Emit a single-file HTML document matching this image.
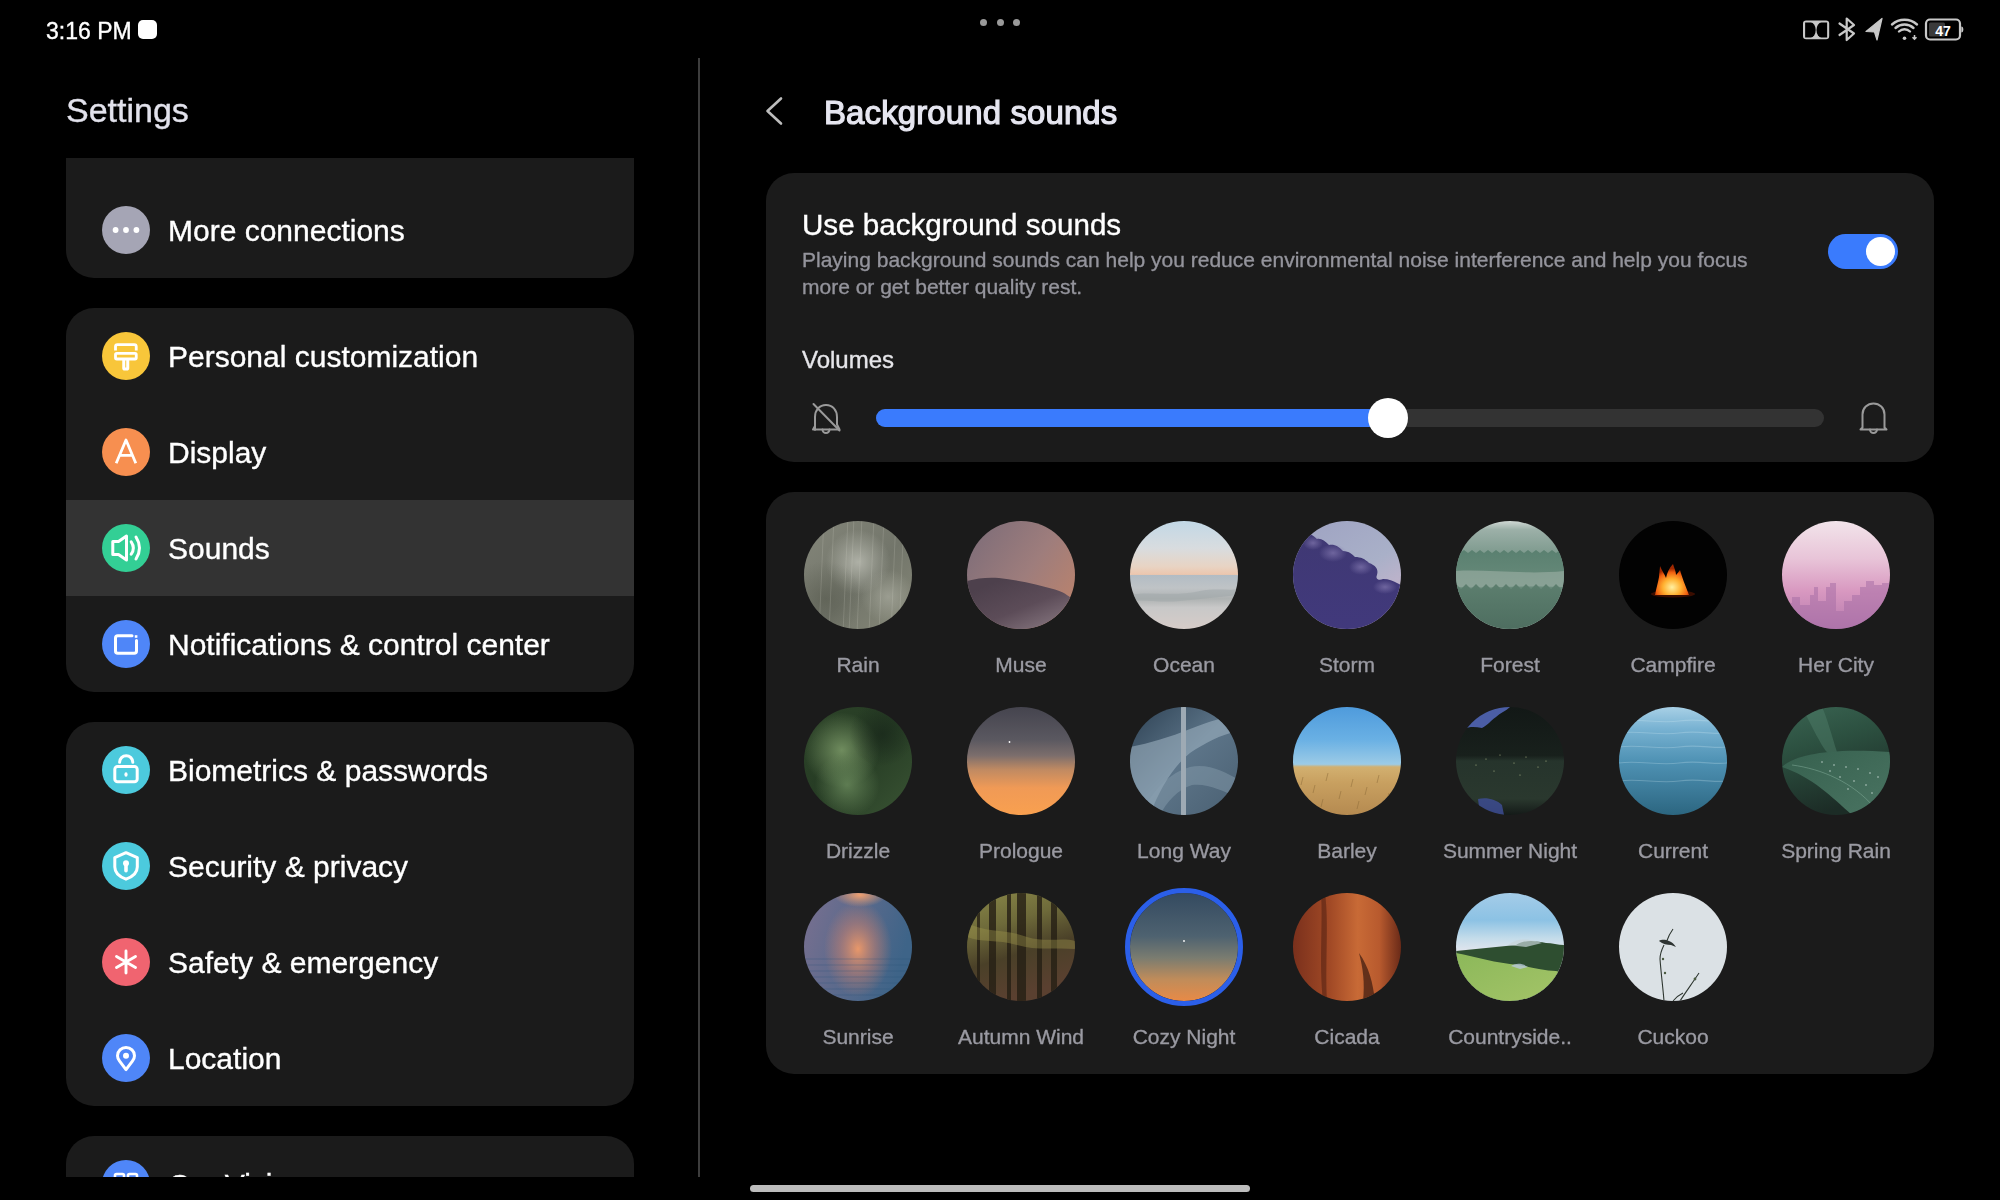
<!DOCTYPE html>
<html><head><meta charset="utf-8"><style>
html,body{margin:0;padding:0;background:#000;}
body{width:2000px;height:1200px;position:relative;overflow:hidden;font-family:"Liberation Sans", sans-serif;}
.t{position:absolute;white-space:nowrap;line-height:1;will-change:transform;-webkit-text-stroke:0.35px currentColor;}
svg{display:block}
</style></head><body>
<div class="t" style="left:45.5px;top:19.5px;font-size:23px;color:#ffffff;">3:16 PM</div>
<div style="position:absolute;left:138px;top:20px;width:19px;height:19px;border-radius:5px;background:#fff"></div>
<div style="position:absolute;left:980.0px;top:19px;width:7px;height:7px;border-radius:50%;background:#9a9a9a"></div>
<div style="position:absolute;left:996.5px;top:19px;width:7px;height:7px;border-radius:50%;background:#9a9a9a"></div>
<div style="position:absolute;left:1013.0px;top:19px;width:7px;height:7px;border-radius:50%;background:#9a9a9a"></div>
<svg style="position:absolute;left:1795px;top:12px" width="180" height="36" viewBox="1795 12 180 36">
<rect x="1803" y="20.4" width="26.2" height="18.9" rx="3.2" fill="#c8c8c8"/>
<path d="M1805.1,22.5 H1810.8 A4.9,7.45 0 0 1 1810.8,37.4 H1805.1 Z" fill="#000"/>
<path d="M1827.1,22.5 H1821.4 A4.9,7.45 0 0 0 1821.4,37.4 H1827.1 Z" fill="#000"/>
<g fill="none" stroke="#c8c8c8" stroke-width="2.2" stroke-linecap="round" stroke-linejoin="round">
 <path d="M1839.5,23.5 L1854,33.5 L1846.7,40 V18.5 L1854,25 L1839.5,35"/>
 <path d="M1921,16" />
</g>
<path d="M1866,31.5 L1882,18.5 L1877,40 L1874.5,32 Z" fill="#c8c8c8" stroke="#c8c8c8" stroke-width="1.2" stroke-linejoin="round"/>
<g fill="none" stroke="#c8c8c8" stroke-width="2.4" stroke-linecap="round">
 <path d="M1892,24.5 A19,19 0 0 1 1917,24.5"/>
 <path d="M1895.5,28 A13.5,13.5 0 0 1 1913.5,28"/>
 <path d="M1899,31.5 A8,8 0 0 1 1910,31.5"/>
</g>
<circle cx="1904.5" cy="38.3" r="1.8" fill="#c8c8c8"/>
<path d="M1914.5,35 v4 M1912.5,37.3 l2,2 l2,-2" stroke="#c8c8c8" stroke-width="1.5" fill="none"/>
<rect x="1926" y="19.5" width="34" height="20" rx="4" fill="none" stroke="#c8c8c8" stroke-width="2.2"/>
<path d="M1961.3,26.5 a2,3 0 0 1 0,6 z" fill="#c8c8c8"/>
<rect x="1929" y="22.5" width="16" height="14" rx="1.5" fill="#3a3a3a"/>
<text x="1943" y="35.5" font-family="Liberation Sans" font-weight="bold" font-size="14" fill="#ffffff" text-anchor="middle">47</text>
</svg>
<div class="t" style="left:66px;top:92.8px;font-size:34px;color:#e2e2ec;">Settings</div>
<div style="position:absolute;left:698px;top:58px;width:2px;height:1119px;background:#3d3d3d"></div>
<div id="leftclip" style="position:absolute;left:0;top:158px;width:698px;height:1019px;overflow:hidden">
<div style="position:absolute;left:66px;top:-28px;width:568px;height:148px;border-radius:28px;background:#1b1b1b;overflow:hidden;"></div>
<div style="position:absolute;left:66px;top:150px;width:568px;height:384px;border-radius:28px;background:#1b1b1b;overflow:hidden;"></div>
<div style="position:absolute;left:66px;top:342px;width:568px;height:96px;background:#333333"></div>
<div style="position:absolute;left:66px;top:564px;width:568px;height:384px;border-radius:28px;background:#1b1b1b;overflow:hidden;"></div>
<div style="position:absolute;left:66px;top:978px;width:568px;height:200px;border-radius:28px;background:#1b1b1b;overflow:hidden;"></div>
<svg style="position:absolute;left:102px;top:48px" width="48" height="48" viewBox="0 0 48 48"><circle cx="24" cy="24" r="24" fill="#a5a5b5"/><circle cx="13.6" cy="24" r="2.9" fill="#fff"/><circle cx="24" cy="24" r="2.9" fill="#fff"/><circle cx="34.4" cy="24" r="2.9" fill="#fff"/></svg>
<div class="t" style="left:168px;top:58.2px;font-size:30px;color:#ffffff;">More connections</div>
<svg style="position:absolute;left:102px;top:174px" width="48" height="48" viewBox="0 0 48 48"><circle cx="24" cy="24" r="24" fill="#f8c63a"/><path d="M13.5,18.6 V14.6 a2,2 0 0 1 2,-2 H32.25 a2,2 0 0 1 2,2 V18.6" fill="none" stroke="#fff" stroke-width="2.8"/><rect x="13.5" y="21.4" width="20.75" height="5.6" rx="1.2" fill="none" stroke="#fff" stroke-width="2.8"/><path d="M21.75,28 V36.3 a0.8,0.8 0 0 0 0.8,0.8 H24.95 a0.8,0.8 0 0 0 0.8,-0.8 V28" fill="none" stroke="#fff" stroke-width="3" stroke-linejoin="round"/></svg>
<div class="t" style="left:168px;top:184.2px;font-size:30px;color:#ffffff;">Personal customization</div>
<svg style="position:absolute;left:102px;top:270px" width="48" height="48" viewBox="0 0 48 48"><circle cx="24" cy="24" r="24" fill="#f78f50"/><path d="M14.2,35.2 L24,12 L33.8,35.2 M18,27.3 H30" fill="none" stroke="#fff" stroke-width="2.8" stroke-linejoin="round"/></svg>
<div class="t" style="left:168px;top:280.2px;font-size:30px;color:#ffffff;">Display</div>
<svg style="position:absolute;left:102px;top:366px" width="48" height="48" viewBox="0 0 48 48"><circle cx="24" cy="24" r="24" fill="#33cf95"/><path d="M10.8,17.5 H16.5 L24.5,12 V36 L16.5,30.5 H10.8 Z" fill="none" stroke="#fff" stroke-width="3" stroke-linejoin="round"/><path d="M29.2,17.8 Q33.5,24 29.2,30.2" fill="none" stroke="#fff" stroke-width="3" stroke-linecap="round"/><path d="M34,13 Q41,24 34,35" fill="none" stroke="#fff" stroke-width="3" stroke-linecap="round"/></svg>
<div class="t" style="left:168px;top:376.2px;font-size:30px;color:#ffffff;">Sounds</div>
<svg style="position:absolute;left:102px;top:462px" width="48" height="48" viewBox="0 0 48 48"><circle cx="24" cy="24" r="24" fill="#4f86f8"/><path d="M30,15.8 H15.8 a2.3,2.3 0 0 0 -2.3,2.3 V31 a2.3,2.3 0 0 0 2.3,2.3 H32.2 a2.3,2.3 0 0 0 2.3,-2.3 V20.5" fill="none" stroke="#fff" stroke-width="3" stroke-linecap="round"/><rect x="32.8" y="15.2" width="2.6" height="2.6" fill="#fff"/></svg>
<div class="t" style="left:168px;top:472.2px;font-size:30px;color:#ffffff;">Notifications &amp; control center</div>
<svg style="position:absolute;left:102px;top:588px" width="48" height="48" viewBox="0 0 48 48"><circle cx="24" cy="24" r="24" fill="#4ccadd"/><rect x="12.8" y="20.5" width="22.4" height="15.3" rx="2.8" fill="none" stroke="#fff" stroke-width="3"/><path d="M17.6,16.3 a6.6,6.6 0 0 1 13.2,0" fill="none" stroke="#fff" stroke-width="3" stroke-linecap="round"/><ellipse cx="24" cy="28.5" rx="1.6" ry="2.2" fill="#fff"/></svg>
<div class="t" style="left:168px;top:598.2px;font-size:30px;color:#ffffff;">Biometrics &amp; passwords</div>
<svg style="position:absolute;left:102px;top:684px" width="48" height="48" viewBox="0 0 48 48"><circle cx="24" cy="24" r="24" fill="#4ccadd"/><path d="M24,10.7 L12.8,15.6 V25 C12.8,30.8 17.5,34.8 24,37.2 C30.5,34.8 35.3,30.8 35.3,25 V15.6 Z" fill="none" stroke="#fff" stroke-width="3" stroke-linejoin="round"/><circle cx="24" cy="21.3" r="3" fill="#fff"/><path d="M24,22 V28.8" stroke="#fff" stroke-width="3.6" stroke-linecap="round"/></svg>
<div class="t" style="left:168px;top:694.2px;font-size:30px;color:#ffffff;">Security &amp; privacy</div>
<svg style="position:absolute;left:102px;top:780px" width="48" height="48" viewBox="0 0 48 48"><circle cx="24" cy="24" r="24" fill="#f06470"/><path d="M24,13 V35 M14.5,18.5 L33.5,29.5 M14.5,29.5 L33.5,18.5" fill="none" stroke="#fff" stroke-width="2.9" stroke-linecap="round"/></svg>
<div class="t" style="left:168px;top:790.2px;font-size:30px;color:#ffffff;">Safety &amp; emergency</div>
<svg style="position:absolute;left:102px;top:876px" width="48" height="48" viewBox="0 0 48 48"><circle cx="24" cy="24" r="24" fill="#4f86f8"/><path d="M24,35.6 L17.6,27.2 C16.2,25.3 15.5,23.6 15.5,21.7 C15.5,17.1 19.3,13.5 24,13.5 C28.7,13.5 32.5,17.1 32.5,21.7 C32.5,23.6 31.8,25.3 30.4,27.2 Z" fill="none" stroke="#fff" stroke-width="3" stroke-linejoin="round"/><circle cx="24" cy="21.8" r="3" fill="#fff"/></svg>
<div class="t" style="left:168px;top:886.2px;font-size:30px;color:#ffffff;">Location</div>
<svg style="position:absolute;left:102px;top:1002px" width="48" height="48" viewBox="0 0 48 48"><circle cx="24" cy="24" r="24" fill="#4f86f8"/><rect x="13" y="14" width="9" height="8" rx="1.5" fill="none" stroke="#fff" stroke-width="2.6"/><rect x="26" y="14" width="9" height="8" rx="1.5" fill="none" stroke="#fff" stroke-width="2.6"/></svg>
<div class="t" style="left:168px;top:1012.2px;font-size:30px;color:#ffffff;">OneVision</div>
</div>
<svg style="position:absolute;left:760px;top:92px" width="30" height="40" viewBox="760 92 30 40"><path d="M781,98.5 L767.5,111 L781,123.5" fill="none" stroke="#bdbdbd" stroke-width="2.6" stroke-linecap="round" stroke-linejoin="round"/></svg>
<div class="t" style="left:823.5px;top:96.1px;font-size:33px;color:#e6e6f0;-webkit-text-stroke:1.2px #e6e6f0;letter-spacing:0.1px;">Background sounds</div>
<div style="position:absolute;left:766px;top:173px;width:1168px;height:289px;border-radius:28px;background:#1b1b1b;overflow:hidden;"></div>
<div class="t" style="left:802px;top:210.4px;font-size:29.6px;color:#ffffff;">Use background sounds</div>
<div class="t" style="left:802px;top:249.0px;font-size:21px;color:#94949c;">Playing background sounds can help you reduce environmental noise interference and help you focus</div>
<div class="t" style="left:802px;top:275.5px;font-size:21px;color:#94949c;">more or get better quality rest.</div>
<div style="position:absolute;left:1828px;top:234px;width:70px;height:35px;border-radius:18px;background:#3a7bfd"></div>
<div style="position:absolute;left:1866px;top:237px;width:29px;height:29px;border-radius:50%;background:#fff"></div>
<div class="t" style="left:802px;top:347.7px;font-size:24px;color:#e6e6ea;">Volumes</div>
<div style="position:absolute;left:876px;top:409px;width:948px;height:18px;border-radius:9px;background:#333333"></div>
<div style="position:absolute;left:876px;top:409px;width:512px;height:18px;border-radius:9px 0 0 9px;background:#3a7bfd"></div>
<div style="position:absolute;left:1368px;top:398px;width:40px;height:40px;border-radius:50%;background:#fff"></div>
<svg style="position:absolute;left:806px;top:398px" width="40" height="40" viewBox="806 398 40 40"><g fill="none" stroke="#9a9a9a" stroke-width="2" stroke-linejoin="round" stroke-linecap="round">
<path d="M815,430 V417 C815,410 819.5,405 826,405 C832.5,405 837,410 837,417 V424.5 L839.5,429.5 H813 L815,426"/>
<path d="M822.5,429.5 a3.5,3.5 0 0 0 7,0"/>
<path d="M813.5,404 L839.5,430.5"/></g></svg>
<svg style="position:absolute;left:1855px;top:398px" width="40" height="40" viewBox="1855 398 40 40"><g fill="none" stroke="#9a9a9a" stroke-width="2" stroke-linejoin="round" stroke-linecap="round">
<path d="M1862.5,427.5 V414.5 C1862.5,408 1867.5,403.5 1873.5,403.5 C1879.5,403.5 1884.5,408 1884.5,414.5 V427.5 L1886.5,429.5 H1860.5 Z"/>
<path d="M1870,429.5 a3.5,3.5 0 0 0 7,0"/></g></svg>
<div style="position:absolute;left:766px;top:492px;width:1168px;height:582px;border-radius:28px;background:#1b1b1b;overflow:hidden;"></div>
<svg style="position:absolute;left:804px;top:521px" width="108" height="108" viewBox="0 0 108 108"><defs><linearGradient id="s1g" x1="0" y1="0" x2="1" y2="1"><stop offset="0" stop-color="#84867a"/><stop offset="0.55" stop-color="#72756a"/><stop offset="1" stop-color="#868878"/></linearGradient><radialGradient id="s1h" cx="0.5" cy="0.38" r="0.3"><stop offset="0" stop-color="#b4b6ac" stop-opacity="0.9"/><stop offset="1" stop-color="#b4b6ac" stop-opacity="0"/></radialGradient><radialGradient id="s1h2" cx="0.78" cy="0.7" r="0.25"><stop offset="0" stop-color="#a8aa9e" stop-opacity="0.7"/><stop offset="1" stop-color="#a8aa9e" stop-opacity="0"/></radialGradient><radialGradient id="s1k" cx="0.2" cy="0.72" r="0.35"><stop offset="0" stop-color="#55584c" stop-opacity="0.6"/><stop offset="1" stop-color="#55584c" stop-opacity="0"/></radialGradient><clipPath id="s1c"><circle cx="54" cy="54" r="54"/></clipPath></defs><g clip-path="url(#s1c)"><rect width="108" height="108" fill="url(#s1g)"/><rect width="108" height="108" fill="url(#s1h)"/><rect width="108" height="108" fill="url(#s1h2)"/><rect width="108" height="108" fill="url(#s1k)"/><path d="M20,-5 L15,113" stroke="#dedcd2" stroke-opacity="0.2" stroke-width="0.9"/><path d="M30,-5 L25,113" stroke="#dedcd2" stroke-opacity="0.2" stroke-width="0.9"/><path d="M44,-5 L39,113" stroke="#dedcd2" stroke-opacity="0.2" stroke-width="0.9"/><path d="M50,-5 L45,113" stroke="#dedcd2" stroke-opacity="0.2" stroke-width="0.9"/><path d="M58,-5 L53,113" stroke="#dedcd2" stroke-opacity="0.2" stroke-width="0.9"/><path d="M70,-5 L65,113" stroke="#dedcd2" stroke-opacity="0.2" stroke-width="0.9"/><path d="M80,-5 L75,113" stroke="#dedcd2" stroke-opacity="0.2" stroke-width="0.9"/><path d="M92,-5 L87,113" stroke="#dedcd2" stroke-opacity="0.2" stroke-width="0.9"/><path d="M100,-5 L95,113" stroke="#dedcd2" stroke-opacity="0.2" stroke-width="0.9"/></g></svg>
<div class="t" style="left:708px;width:300px;text-align:center;top:654.2px;font-size:21px;color:#9a9aa2;">Rain</div>
<svg style="position:absolute;left:967px;top:521px" width="108" height="108" viewBox="0 0 108 108"><defs><linearGradient id="s2g" x1="0" y1="0" x2="1" y2="0.7"><stop offset="0" stop-color="#7a6b78"/><stop offset="0.6" stop-color="#9e7d7c"/><stop offset="1" stop-color="#b8826e"/></linearGradient><linearGradient id="s2d" x1="0" y1="0.3" x2="0.6" y2="1"><stop offset="0" stop-color="#4d404c"/><stop offset="0.6" stop-color="#5c4c58"/><stop offset="1" stop-color="#7a6a74"/></linearGradient><clipPath id="s2c"><circle cx="54" cy="54" r="54"/></clipPath></defs><g clip-path="url(#s2c)"><rect width="108" height="108" fill="url(#s2g)"/><path d="M0,60 C10,57 22,56 32,57 C50,59 70,63 88,68.5 C96,71 101,74 106,79 L108,80 V108 H0 Z" fill="url(#s2d)"/></g></svg>
<div class="t" style="left:871px;width:300px;text-align:center;top:654.2px;font-size:21px;color:#9a9aa2;">Muse</div>
<svg style="position:absolute;left:1130px;top:521px" width="108" height="108" viewBox="0 0 108 108"><defs><linearGradient id="s3g" x1="0" y1="0" x2="0" y2="1"><stop offset="0" stop-color="#c2d8e6"/><stop offset="0.25" stop-color="#d8dcdf"/><stop offset="0.42" stop-color="#e8d4c4"/><stop offset="0.495" stop-color="#ecc6ae"/><stop offset="0.5" stop-color="#b2bcc4"/><stop offset="0.62" stop-color="#bfc3c6"/><stop offset="0.72" stop-color="#aeb2b2"/><stop offset="0.8" stop-color="#c8c8c8"/><stop offset="1" stop-color="#d6ccc8"/></linearGradient><clipPath id="s3c"><circle cx="54" cy="54" r="54"/></clipPath></defs><g clip-path="url(#s3c)"><rect width="108" height="108" fill="url(#s3g)"/><path d="M0,74 C20,70 45,76 70,70 C85,67 100,70 108,68 V74 C90,76 70,78 50,80 C30,82 15,78 0,80 Z" fill="#9ea6a8" opacity="0.5"/></g></svg>
<div class="t" style="left:1034px;width:300px;text-align:center;top:654.2px;font-size:21px;color:#9a9aa2;">Ocean</div>
<svg style="position:absolute;left:1293px;top:521px" width="108" height="108" viewBox="0 0 108 108"><defs><linearGradient id="s4g" x1="0" y1="0" x2="0.6" y2="1"><stop offset="0" stop-color="#9ea2c2"/><stop offset="0.6" stop-color="#a9b0c8"/><stop offset="1" stop-color="#c9b4cc"/></linearGradient><linearGradient id="s4d" x1="0" y1="0" x2="0" y2="1"><stop offset="0" stop-color="#3f3873"/><stop offset="1" stop-color="#41397c"/></linearGradient><radialGradient id="s4p" cx="0.5" cy="0.5" r="0.5"><stop offset="0" stop-color="#7a70a8" stop-opacity="0.8"/><stop offset="1" stop-color="#7a70a8" stop-opacity="0"/></radialGradient><clipPath id="s4c"><circle cx="54" cy="54" r="54"/></clipPath></defs><g clip-path="url(#s4c)"><rect width="108" height="108" fill="url(#s4g)"/><path d="M0,12 C6,10 10,14 14,14 C18,12 22,16 24,18 C28,17 32,20 36,24 C42,23 46,26 50,30 C56,30 60,34 62,36 C68,36 72,38 76,42 C82,44 86,48 84,54 C82,58 86,60 90,58 C96,58 100,60 104,62 L108,64 V108 H0 Z" fill="url(#s4d)"/><ellipse cx="40" cy="32" rx="14" ry="9" fill="url(#s4p)"/><ellipse cx="68" cy="46" rx="12" ry="8" fill="url(#s4p)"/><ellipse cx="92" cy="66" rx="12" ry="7" fill="url(#s4p)"/><ellipse cx="20" cy="22" rx="10" ry="7" fill="url(#s4p)"/></g></svg>
<div class="t" style="left:1197px;width:300px;text-align:center;top:654.2px;font-size:21px;color:#9a9aa2;">Storm</div>
<svg style="position:absolute;left:1456px;top:521px" width="108" height="108" viewBox="0 0 108 108"><defs><linearGradient id="s5g" x1="0" y1="0" x2="0" y2="1"><stop offset="0" stop-color="#d0d8d4"/><stop offset="0.08" stop-color="#9cb0a8"/><stop offset="0.3" stop-color="#7e9a8e"/><stop offset="1" stop-color="#8aa096"/></linearGradient><linearGradient id="s5t1" x1="0" y1="0" x2="0" y2="1"><stop offset="0" stop-color="#5a8070"/><stop offset="0.5" stop-color="#6a8c7c"/><stop offset="1" stop-color="#98aea2"/></linearGradient><linearGradient id="s5t2" x1="0" y1="0" x2="0" y2="1"><stop offset="0" stop-color="#5c7e6e"/><stop offset="1" stop-color="#4e6e60"/></linearGradient><clipPath id="s5c"><circle cx="54" cy="54" r="54"/></clipPath></defs><g clip-path="url(#s5c)"><rect width="108" height="108" fill="url(#s5g)"/><path d="M0,108 V34 L0,29 L4,32 L8,29 L12,32 L16,29 L20,32 L24,29 L28,32 L32,29 L36,32 L40,29 L44,32 L48,29 L52,32 L56,29 L60,32 L64,29 L68,32 L72,29 L76,32 L80,29 L84,32 L88,29 L92,32 L96,29 L100,32 L104,29 L108,32 V108 Z" fill="url(#s5t1)"/><path d="M0,50 C30,48 70,54 108,50 V66 C70,64 30,68 0,66 Z" fill="#a4b4ac" opacity="0.55"/><path d="M0,108 V70 L0,63 L5,68 L10,63 L15,68 L20,63 L25,68 L30,63 L35,68 L40,63 L45,68 L50,63 L55,68 L60,63 L65,68 L70,63 L75,68 L80,63 L85,68 L90,63 L95,68 L100,63 L105,68 V108 Z" fill="url(#s5t2)"/></g></svg>
<div class="t" style="left:1360px;width:300px;text-align:center;top:654.2px;font-size:21px;color:#9a9aa2;">Forest</div>
<svg style="position:absolute;left:1619px;top:521px" width="108" height="108" viewBox="0 0 108 108"><defs><radialGradient id="s6f" cx="0.5" cy="0.75" r="0.6"><stop offset="0" stop-color="#fff0a0" stop-opacity="1"/><stop offset="0.45" stop-color="#ffb030" stop-opacity="1"/><stop offset="0.8" stop-color="#f06010" stop-opacity="1"/><stop offset="1" stop-color="#a02800" stop-opacity="1"/></radialGradient><clipPath id="s6c"><circle cx="54" cy="54" r="54"/></clipPath></defs><g clip-path="url(#s6c)"><rect width="108" height="108" fill="#020202"/><ellipse cx="54" cy="73" rx="22" ry="3.5" fill="#6a1800" opacity="0.55"/><path d="M36,74 C37,68 39,62 40,56 C40,52 41,48 41,45 C43,50 46,54 47,57 C48,52 50,47 54,43 C55,47 57,50 57,54 C59,52 60,50 61,49 C63,56 66,64 70,74 Z" fill="url(#s6f)"/></g></svg>
<div class="t" style="left:1523px;width:300px;text-align:center;top:654.2px;font-size:21px;color:#9a9aa2;">Campfire</div>
<svg style="position:absolute;left:1782px;top:521px" width="108" height="108" viewBox="0 0 108 108"><defs><linearGradient id="s7g" x1="0" y1="0" x2="0" y2="1"><stop offset="0" stop-color="#f2e4ea"/><stop offset="0.35" stop-color="#e8c4d8"/><stop offset="0.65" stop-color="#d898c0"/><stop offset="1" stop-color="#b67aae"/></linearGradient><clipPath id="s7c"><circle cx="54" cy="54" r="54"/></clipPath></defs><g clip-path="url(#s7c)"><rect width="108" height="108" fill="url(#s7g)"/><path d="M4,108 V82 H10 V76 H18 V84 H28 V74 H32 V66 H36 V80 H44 V66 H48 V62 H54 V90 H62 V80 H70 V74 H78 V66 H84 V60 H92 V64 H100 V62 H108 V108 Z" fill="#a870a6" opacity="0.55"/></g></svg>
<div class="t" style="left:1686px;width:300px;text-align:center;top:654.2px;font-size:21px;color:#9a9aa2;">Her City</div>
<svg style="position:absolute;left:804px;top:707px" width="108" height="108" viewBox="0 0 108 108"><defs><linearGradient id="s8g" x1="0" y1="0" x2="1" y2="1"><stop offset="0" stop-color="#2c4228"/><stop offset="0.5" stop-color="#263c24"/><stop offset="1" stop-color="#3a5434"/></linearGradient><radialGradient id="s8h" cx="0.35" cy="0.4" r="0.35"><stop offset="0" stop-color="#7c9a68" stop-opacity="0.85"/><stop offset="1" stop-color="#7c9a68" stop-opacity="0"/></radialGradient><radialGradient id="s8h2" cx="0.4" cy="0.72" r="0.3"><stop offset="0" stop-color="#6a8a5c" stop-opacity="0.8"/><stop offset="1" stop-color="#6a8a5c" stop-opacity="0"/></radialGradient><radialGradient id="s8h3" cx="0.72" cy="0.25" r="0.3"><stop offset="0" stop-color="#18261a" stop-opacity="0.7"/><stop offset="1" stop-color="#18261a" stop-opacity="0"/></radialGradient><clipPath id="s8c"><circle cx="54" cy="54" r="54"/></clipPath></defs><g clip-path="url(#s8c)"><rect width="108" height="108" fill="url(#s8g)"/><rect width="108" height="108" fill="url(#s8h)"/><rect width="108" height="108" fill="url(#s8h2)"/><rect width="108" height="108" fill="url(#s8h3)"/></g></svg>
<div class="t" style="left:708px;width:300px;text-align:center;top:840.2px;font-size:21px;color:#9a9aa2;">Drizzle</div>
<svg style="position:absolute;left:967px;top:707px" width="108" height="108" viewBox="0 0 108 108"><defs><linearGradient id="s9g" x1="0" y1="0" x2="0" y2="1"><stop offset="0" stop-color="#45444e"/><stop offset="0.3" stop-color="#5a5860"/><stop offset="0.45" stop-color="#7c6e6c"/><stop offset="0.58" stop-color="#c08a62"/><stop offset="0.75" stop-color="#f09a56"/><stop offset="1" stop-color="#f9a04f"/></linearGradient><clipPath id="s9c"><circle cx="54" cy="54" r="54"/></clipPath></defs><g clip-path="url(#s9c)"><rect width="108" height="108" fill="url(#s9g)"/><circle cx="42.5" cy="35" r="0.9" fill="#fff"/></g></svg>
<div class="t" style="left:871px;width:300px;text-align:center;top:840.2px;font-size:21px;color:#9a9aa2;">Prologue</div>
<svg style="position:absolute;left:1130px;top:707px" width="108" height="108" viewBox="0 0 108 108"><defs><linearGradient id="s10g" x1="0" y1="0" x2="1" y2="1"><stop offset="0" stop-color="#2e4254"/><stop offset="0.5" stop-color="#5c7488"/><stop offset="1" stop-color="#4a6072"/></linearGradient><clipPath id="s10c"><circle cx="54" cy="54" r="54"/></clipPath></defs><g clip-path="url(#s10c)"><rect width="108" height="108" fill="url(#s10g)"/><path d="M0,40 C20,36 40,30 60,22 C80,14 95,10 108,8 V24 C90,28 75,36 60,46 C45,58 30,80 20,108 H0 Z" fill="#a2b6c4" opacity="0.55"/><path d="M10,108 C25,80 40,66 60,60 C80,56 95,66 108,72 V90 C92,84 78,76 62,78 C48,82 36,96 30,108 Z" fill="#8aa0b0" opacity="0.45"/><rect x="51" y="0" width="5" height="108" fill="#9eaab4"/></g></svg>
<div class="t" style="left:1034px;width:300px;text-align:center;top:840.2px;font-size:21px;color:#9a9aa2;">Long Way</div>
<svg style="position:absolute;left:1293px;top:707px" width="108" height="108" viewBox="0 0 108 108"><defs><linearGradient id="s11g" x1="0" y1="0" x2="0" y2="1"><stop offset="0" stop-color="#4f9bdc"/><stop offset="0.3" stop-color="#69b0e4"/><stop offset="0.53" stop-color="#9ccbe6"/><stop offset="0.555" stop-color="#d2b070"/><stop offset="0.7" stop-color="#c8a060"/><stop offset="1" stop-color="#b58a50"/></linearGradient><clipPath id="s11c"><circle cx="54" cy="54" r="54"/></clipPath></defs><g clip-path="url(#s11c)"><rect width="108" height="108" fill="url(#s11g)"/><path d="M10,70 l-2,8" stroke="#8a6a38" stroke-width="1" opacity="0.5"/><path d="M22,78 l-2,8" stroke="#8a6a38" stroke-width="1" opacity="0.5"/><path d="M35,66 l-2,8" stroke="#8a6a38" stroke-width="1" opacity="0.5"/><path d="M48,84 l-2,8" stroke="#8a6a38" stroke-width="1" opacity="0.5"/><path d="M60,72 l-2,8" stroke="#8a6a38" stroke-width="1" opacity="0.5"/><path d="M74,80 l-2,8" stroke="#8a6a38" stroke-width="1" opacity="0.5"/><path d="M86,68 l-2,8" stroke="#8a6a38" stroke-width="1" opacity="0.5"/><path d="M96,86 l-2,8" stroke="#8a6a38" stroke-width="1" opacity="0.5"/><path d="M30,92 l-2,8" stroke="#8a6a38" stroke-width="1" opacity="0.5"/><path d="M66,94 l-2,8" stroke="#8a6a38" stroke-width="1" opacity="0.5"/></g></svg>
<div class="t" style="left:1197px;width:300px;text-align:center;top:840.2px;font-size:21px;color:#9a9aa2;">Barley</div>
<svg style="position:absolute;left:1456px;top:707px" width="108" height="108" viewBox="0 0 108 108"><defs><linearGradient id="s12g" x1="0" y1="0" x2="0" y2="1"><stop offset="0" stop-color="#121816"/><stop offset="0.45" stop-color="#18201c"/><stop offset="0.5" stop-color="#26342c"/><stop offset="0.85" stop-color="#2a382e"/><stop offset="1" stop-color="#141a18"/></linearGradient><clipPath id="s12c"><circle cx="54" cy="54" r="54"/></clipPath></defs><g clip-path="url(#s12c)"><rect width="108" height="108" fill="url(#s12g)"/><path d="M0,0 H54 C50,4 44,6 40,10 C34,14 32,18 26,21 C20,20 14,19 8,22 L0,24 Z" fill="#4b5ea6"/><path d="M22,92 C30,90 40,92 46,98 L48,108 H24 Z" fill="#3d4c92" opacity="0.85"/><circle cx="30" cy="52" r="0.6" fill="#e8f0b0" opacity="0.7"/><circle cx="44" cy="48" r="0.6" fill="#e8f0b0" opacity="0.7"/><circle cx="58" cy="56" r="0.6" fill="#e8f0b0" opacity="0.7"/><circle cx="70" cy="50" r="0.6" fill="#e8f0b0" opacity="0.7"/><circle cx="82" cy="60" r="0.6" fill="#e8f0b0" opacity="0.7"/><circle cx="38" cy="64" r="0.6" fill="#e8f0b0" opacity="0.7"/><circle cx="64" cy="68" r="0.6" fill="#e8f0b0" opacity="0.7"/><circle cx="90" cy="54" r="0.6" fill="#e8f0b0" opacity="0.7"/><circle cx="20" cy="58" r="0.6" fill="#e8f0b0" opacity="0.7"/></g></svg>
<div class="t" style="left:1360px;width:300px;text-align:center;top:840.2px;font-size:21px;color:#9a9aa2;">Summer Night</div>
<svg style="position:absolute;left:1619px;top:707px" width="108" height="108" viewBox="0 0 108 108"><defs><linearGradient id="s13g" x1="0" y1="0" x2="0" y2="1"><stop offset="0" stop-color="#a8d0e6"/><stop offset="0.2" stop-color="#78b2d2"/><stop offset="0.5" stop-color="#4f92b4"/><stop offset="0.8" stop-color="#3a7896"/><stop offset="1" stop-color="#2c6680"/></linearGradient><clipPath id="s13c"><circle cx="54" cy="54" r="54"/></clipPath></defs><g clip-path="url(#s13c)"><rect width="108" height="108" fill="url(#s13g)"/><path d="M0,14 C20,11 40,17 60,14 C80,11 95,16 108,14" stroke="#d8eef8" stroke-opacity="0.25" stroke-width="1.2" fill="none"/><path d="M0,26 C20,23 40,29 60,26 C80,23 95,28 108,26" stroke="#d8eef8" stroke-opacity="0.25" stroke-width="1.2" fill="none"/><path d="M0,40 C20,37 40,43 60,40 C80,37 95,42 108,40" stroke="#d8eef8" stroke-opacity="0.25" stroke-width="1.2" fill="none"/><path d="M0,56 C20,53 40,59 60,56 C80,53 95,58 108,56" stroke="#d8eef8" stroke-opacity="0.25" stroke-width="1.2" fill="none"/><path d="M0,74 C20,71 40,77 60,74 C80,71 95,76 108,74" stroke="#d8eef8" stroke-opacity="0.25" stroke-width="1.2" fill="none"/></g></svg>
<div class="t" style="left:1523px;width:300px;text-align:center;top:840.2px;font-size:21px;color:#9a9aa2;">Current</div>
<svg style="position:absolute;left:1782px;top:707px" width="108" height="108" viewBox="0 0 108 108"><defs><linearGradient id="s14g" x1="0" y1="0" x2="0.3" y2="1"><stop offset="0" stop-color="#3a6452"/><stop offset="0.4" stop-color="#2c5040"/><stop offset="1" stop-color="#1c2c26"/></linearGradient><linearGradient id="s14l" x1="0" y1="0" x2="1" y2="1"><stop offset="0" stop-color="#36604e"/><stop offset="1" stop-color="#4a7462"/></linearGradient><clipPath id="s14c"><circle cx="54" cy="54" r="54"/></clipPath></defs><g clip-path="url(#s14c)"><rect width="108" height="108" fill="url(#s14g)"/><path d="M20,0 C30,20 40,40 45,45 L55,45 C50,30 45,10 40,0 Z" fill="#4e7c68" opacity="0.5"/><path d="M0,60 C10,50 40,40 108,45 V98 C90,104 80,106 70,108 C50,90 30,70 0,60 Z" fill="url(#s14l)"/><circle cx="40" cy="55" r="0.8" fill="#e6f2ec" opacity="0.75"/><circle cx="52" cy="58" r="0.8" fill="#e6f2ec" opacity="0.75"/><circle cx="64" cy="60" r="0.8" fill="#e6f2ec" opacity="0.75"/><circle cx="76" cy="62" r="0.8" fill="#e6f2ec" opacity="0.75"/><circle cx="88" cy="66" r="0.8" fill="#e6f2ec" opacity="0.75"/><circle cx="58" cy="70" r="0.8" fill="#e6f2ec" opacity="0.75"/><circle cx="72" cy="74" r="0.8" fill="#e6f2ec" opacity="0.75"/><circle cx="84" cy="78" r="0.8" fill="#e6f2ec" opacity="0.75"/><circle cx="96" cy="70" r="0.8" fill="#e6f2ec" opacity="0.75"/><circle cx="48" cy="64" r="0.8" fill="#e6f2ec" opacity="0.75"/><circle cx="66" cy="82" r="0.8" fill="#e6f2ec" opacity="0.75"/><circle cx="90" cy="86" r="0.8" fill="#e6f2ec" opacity="0.75"/><path d="M10,58 C40,62 70,75 92,100" stroke="#8ab4a0" stroke-width="0.8" fill="none" opacity="0.6"/></g></svg>
<div class="t" style="left:1686px;width:300px;text-align:center;top:840.2px;font-size:21px;color:#9a9aa2;">Spring Rain</div>
<svg style="position:absolute;left:804px;top:893px" width="108" height="108" viewBox="0 0 108 108"><defs><linearGradient id="s15g" x1="0" y1="0" x2="1" y2="0.3"><stop offset="0" stop-color="#7a7090"/><stop offset="0.5" stop-color="#5c6a8c"/><stop offset="1" stop-color="#3e6488"/></linearGradient><radialGradient id="s15s" cx="0.5" cy="0.5" r="0.5"><stop offset="0" stop-color="#f09a68" stop-opacity="0.95"/><stop offset="0.55" stop-color="#c8806e" stop-opacity="0.5"/><stop offset="1" stop-color="#c8806e" stop-opacity="0"/></radialGradient><radialGradient id="s15t" cx="0.5" cy="0.5" r="0.5"><stop offset="0" stop-color="#f0a070" stop-opacity="1"/><stop offset="1" stop-color="#f0a070" stop-opacity="0"/></radialGradient><clipPath id="s15c"><circle cx="54" cy="54" r="54"/></clipPath></defs><g clip-path="url(#s15c)"><rect width="108" height="108" fill="url(#s15g)"/><ellipse cx="54" cy="56" rx="34" ry="48" fill="url(#s15s)"/><ellipse cx="56" cy="2" rx="26" ry="12" fill="url(#s15t)"/><path d="M0,66 H108" stroke="#2e5078" stroke-opacity="0.2" stroke-width="1.3"/><path d="M0,72 H108" stroke="#2e5078" stroke-opacity="0.2" stroke-width="1.3"/><path d="M0,78 H108" stroke="#2e5078" stroke-opacity="0.2" stroke-width="1.3"/><path d="M0,84 H108" stroke="#2e5078" stroke-opacity="0.2" stroke-width="1.3"/><path d="M0,90 H108" stroke="#2e5078" stroke-opacity="0.2" stroke-width="1.3"/><path d="M0,96 H108" stroke="#2e5078" stroke-opacity="0.2" stroke-width="1.3"/><path d="M0,102 H108" stroke="#2e5078" stroke-opacity="0.2" stroke-width="1.3"/></g></svg>
<div class="t" style="left:708px;width:300px;text-align:center;top:1026.2px;font-size:21px;color:#9a9aa2;">Sunrise</div>
<svg style="position:absolute;left:967px;top:893px" width="108" height="108" viewBox="0 0 108 108"><defs><linearGradient id="s16g" x1="0" y1="0" x2="0.3" y2="1"><stop offset="0" stop-color="#8a8848"/><stop offset="0.35" stop-color="#6e6a3a"/><stop offset="0.65" stop-color="#4a4028"/><stop offset="1" stop-color="#5a4030"/></linearGradient><clipPath id="s16c"><circle cx="54" cy="54" r="54"/></clipPath></defs><g clip-path="url(#s16c)"><rect width="108" height="108" fill="url(#s16g)"/><rect x="10" y="0" width="3" height="108" fill="#241e14" opacity="0.8"/><rect x="22" y="0" width="7" height="108" fill="#241e14" opacity="0.8"/><rect x="40" y="0" width="4" height="108" fill="#241e14" opacity="0.8"/><rect x="50" y="0" width="9" height="108" fill="#241e14" opacity="0.8"/><rect x="70" y="0" width="5" height="108" fill="#241e14" opacity="0.8"/><rect x="84" y="0" width="6" height="108" fill="#241e14" opacity="0.8"/><path d="M0,30 C20,40 40,36 60,44 C80,50 95,44 108,48 V56 C90,54 70,58 50,52 C30,46 15,50 0,44 Z" fill="#a8a050" opacity="0.35"/></g></svg>
<div class="t" style="left:871px;width:300px;text-align:center;top:1026.2px;font-size:21px;color:#9a9aa2;">Autumn Wind</div>
<svg style="position:absolute;left:1130px;top:893px" width="108" height="108" viewBox="0 0 108 108"><defs><linearGradient id="s17g" x1="0" y1="0" x2="0" y2="1"><stop offset="0" stop-color="#344a60"/><stop offset="0.4" stop-color="#4e6270"/><stop offset="0.6" stop-color="#7a7c70"/><stop offset="0.8" stop-color="#c08c5a"/><stop offset="1" stop-color="#e88a46"/></linearGradient><clipPath id="s17c"><circle cx="54" cy="54" r="54"/></clipPath></defs><g clip-path="url(#s17c)"><rect width="108" height="108" fill="url(#s17g)"/><circle cx="54" cy="48" r="0.9" fill="#fff"/></g></svg>
<div class="t" style="left:1034px;width:300px;text-align:center;top:1026.2px;font-size:21px;color:#9a9aa2;">Cozy Night</div>
<svg style="position:absolute;left:1293px;top:893px" width="108" height="108" viewBox="0 0 108 108"><defs><linearGradient id="s18g" x1="0" y1="0" x2="1" y2="0"><stop offset="0" stop-color="#7a301c"/><stop offset="0.35" stop-color="#a24a26"/><stop offset="0.6" stop-color="#c86a36"/><stop offset="0.8" stop-color="#b85a2e"/><stop offset="1" stop-color="#6a2a18"/></linearGradient><clipPath id="s18c"><circle cx="54" cy="54" r="54"/></clipPath></defs><g clip-path="url(#s18c)"><rect width="108" height="108" fill="url(#s18g)"/><path d="M28,0 C30,30 26,70 30,108 H34 C32,70 36,30 32,0 Z" fill="#4a1c10" opacity="0.5"/><path d="M66,60 C70,75 72,90 70,108 H82 C80,90 76,74 66,60 Z" fill="#3a1a10" opacity="0.7"/></g></svg>
<div class="t" style="left:1197px;width:300px;text-align:center;top:1026.2px;font-size:21px;color:#9a9aa2;">Cicada</div>
<svg style="position:absolute;left:1456px;top:893px" width="108" height="108" viewBox="0 0 108 108"><defs><linearGradient id="s19g" x1="0" y1="0" x2="0" y2="1"><stop offset="0" stop-color="#a4cce8"/><stop offset="0.25" stop-color="#8cc2e4"/><stop offset="0.42" stop-color="#c4dcea"/><stop offset="0.55" stop-color="#e4e6ee"/><stop offset="1" stop-color="#e4e6ee"/></linearGradient><linearGradient id="s19gr" x1="0" y1="0" x2="1" y2="1"><stop offset="0" stop-color="#8cb85a"/><stop offset="1" stop-color="#a4c468"/></linearGradient><clipPath id="s19c"><circle cx="54" cy="54" r="54"/></clipPath></defs><g clip-path="url(#s19c)"><rect width="108" height="108" fill="url(#s19g)"/><path d="M0,58 C20,56 40,54 60,52 C70,46 80,48 90,50 C96,50 102,52 108,52 V108 H0 Z" fill="#2e4e30"/><path d="M52,52 C62,44 74,46 86,50 L70,54 Z" fill="#c8d4d8" opacity="0.7"/><path d="M0,60 C20,64 40,70 62,72 C75,74 88,78 100,78 L108,80 V108 H0 Z" fill="url(#s19gr)"/><path d="M55,73 C60,70 66,70 72,74 L64,76 Z" fill="#b8c8d8" opacity="0.8"/></g></svg>
<div class="t" style="left:1360px;width:300px;text-align:center;top:1026.2px;font-size:21px;color:#9a9aa2;">Countryside..</div>
<svg style="position:absolute;left:1619px;top:893px" width="108" height="108" viewBox="0 0 108 108"><defs><clipPath id="s20c"><circle cx="54" cy="54" r="54"/></clipPath></defs><g clip-path="url(#s20c)"><rect width="108" height="108" fill="#dbe1e5"/><path d="M45,108 C44,95 42,80 41,66 C41,60 43,56 45,52 M47,50 C49,44 51,40 54,36 M61,108 C66,100 72,92 80,80 M54,108 C57,104 60,102 64,100" stroke="#2e3630" stroke-width="1.1" fill="none"/><path d="M40,48 C43,46 47,47 50,48 C53,49 55,51 57,54 L52,52 C48,52 44,51 40,48 Z" fill="#2e3432"/><circle cx="44" cy="66" r="1.2" fill="#4a5a40"/><circle cx="46" cy="80" r="1.2" fill="#4a5a40"/><circle cx="76" cy="86" r="1.4" fill="#4a5a40"/></g></svg>
<div class="t" style="left:1523px;width:300px;text-align:center;top:1026.2px;font-size:21px;color:#9a9aa2;">Cuckoo</div>
<div style="position:absolute;left:1125px;top:888px;width:108px;height:108px;border-radius:50%;border:5px solid #2b5fe9"></div>
<div style="position:absolute;left:750px;top:1185px;width:500px;height:7px;border-radius:4px;background:#bdbdbd"></div>
</body></html>
